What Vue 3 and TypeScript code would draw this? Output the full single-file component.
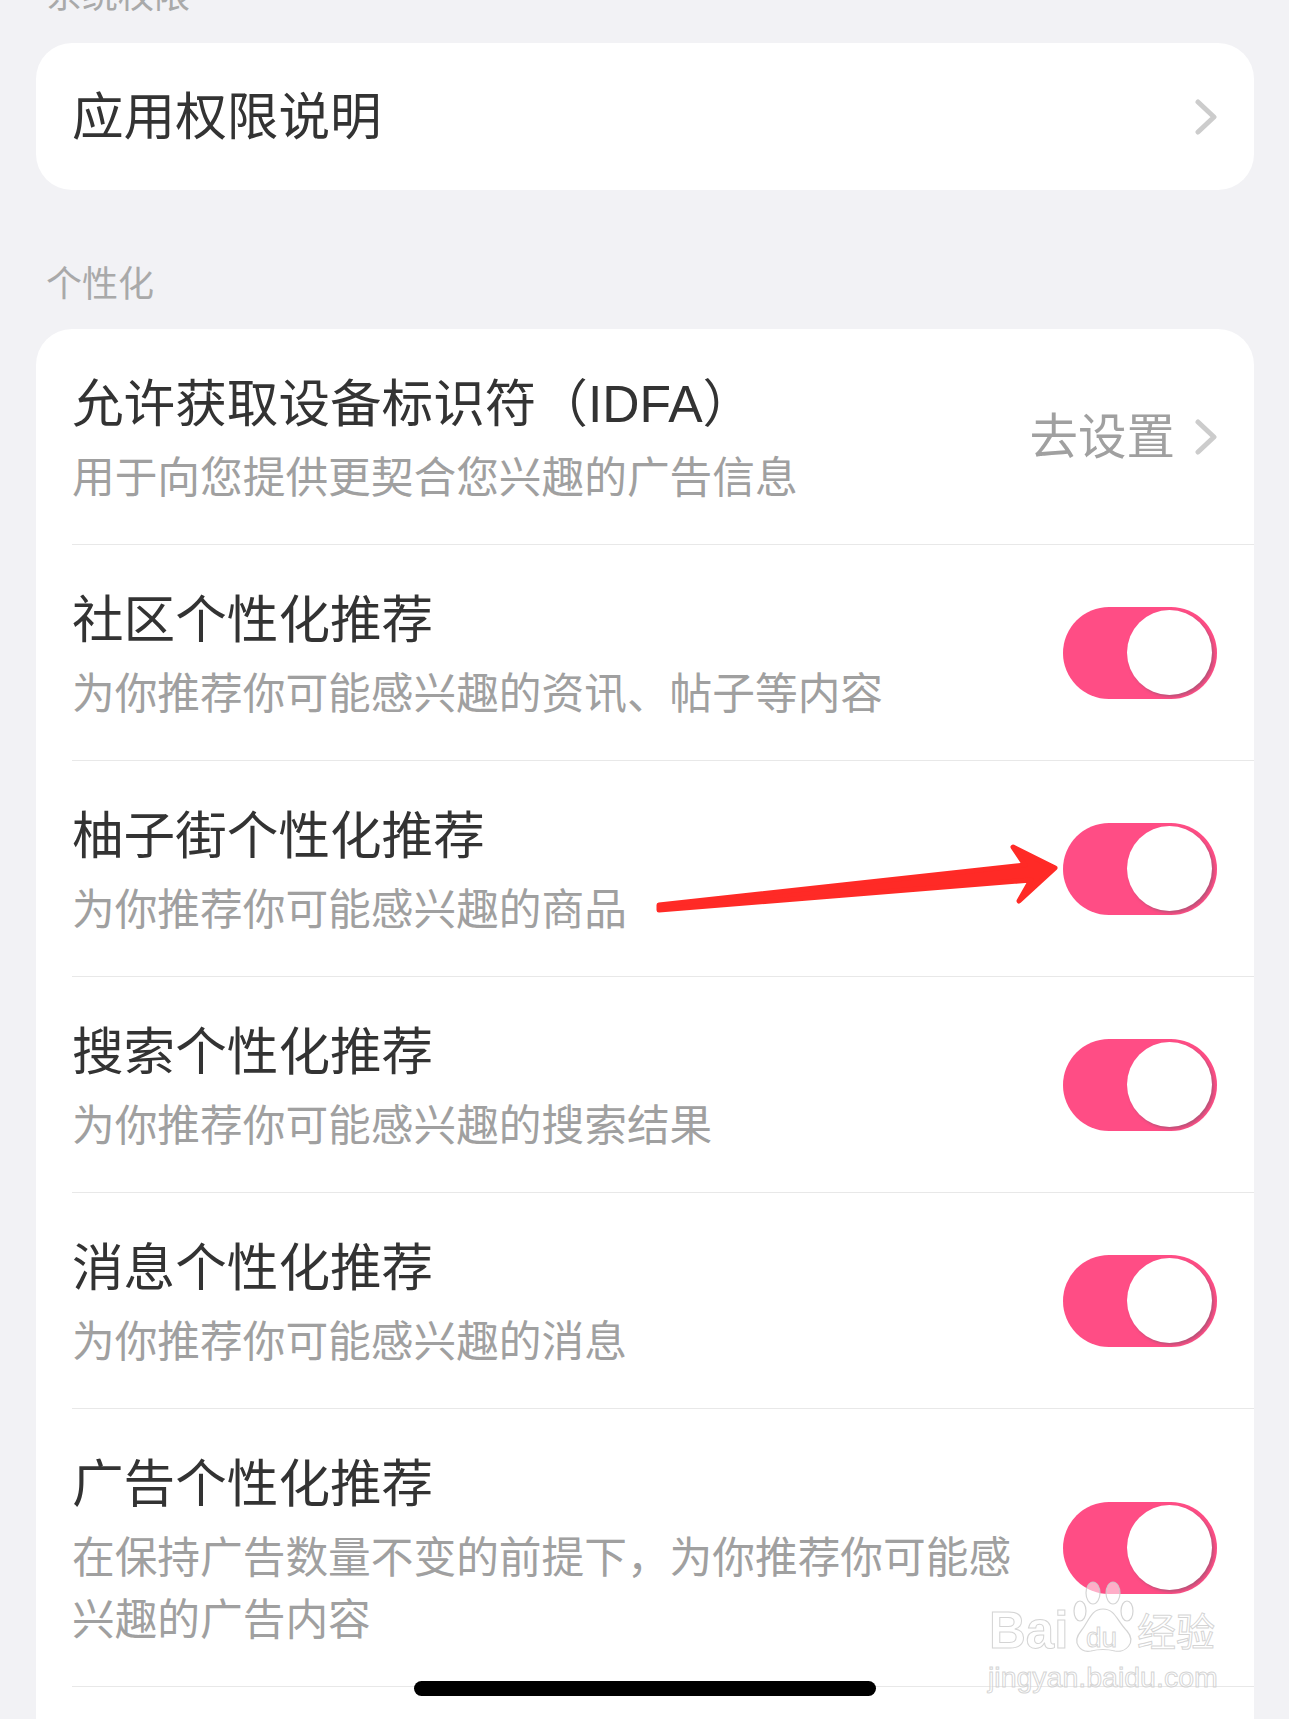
<script setup lang="ts">
interface Row {
  title: string
  sub: string
}
const rows: Row[] = [
  { title: '社区个性化推荐', sub: '为你推荐你可能感兴趣的资讯、帖子等内容' },
  { title: '柚子街个性化推荐', sub: '为你推荐你可能感兴趣的商品' },
  { title: '搜索个性化推荐', sub: '为你推荐你可能感兴趣的搜索结果' },
  { title: '消息个性化推荐', sub: '为你推荐你可能感兴趣的消息' },
  { title: '广告个性化推荐', sub: '在保持广告数量不变的前提下，为你推荐你可能感兴趣的广告内容' },
]
</script>

<template>
  <div class="page">
    <div class="label first">系统权限</div>
    <section class="card single">
      <div class="single-row">
        <span class="title">应用权限说明</span>
        <svg class="chev" viewBox="0 0 22 36"><path d="M3 3 L19 18 L3 33" /></svg>
      </div>
    </section>

    <div class="label second">个性化</div>
    <section class="card list">
      <div class="row">
        <div class="texts">
          <div class="title">允许获取设备标识符（IDFA）</div>
          <div class="sub">用于向您提供更契合您兴趣的广告信息</div>
        </div>
        <div class="action">
          <span class="go">去设置</span>
          <svg class="chev" viewBox="0 0 22 36"><path d="M3 3 L19 18 L3 33" /></svg>
        </div>
      </div>
      <div v-for="r in rows" :key="r.title" class="row">
        <div class="texts">
          <div class="title">{{ r.title }}</div>
          <div class="sub">{{ r.sub }}</div>
        </div>
        <div class="toggle"><span class="knob"></span></div>
      </div>
    </section>

    <svg class="arrow" viewBox="0 0 420 90" width="420" height="90">
      <path
        d="M6 65 L372 25 L360 7 L402 28 L366 61 L378 40 L6 70 Z"
        fill="#ff2a26"
        stroke="#ff2a26"
        stroke-width="5"
        stroke-linejoin="round"
      />
    </svg>

    <div class="watermark">
      <svg class="paw" viewBox="0 0 62 74">
        <ellipse cx="20" cy="12" rx="7" ry="11" />
        <ellipse cx="40" cy="12" rx="7" ry="11" />
        <ellipse cx="7" cy="30" rx="6" ry="10" />
        <ellipse cx="54" cy="30" rx="6" ry="10" />
        <path d="M30 28 C42 28 44 40 54 50 C64 62 52 72 42 70 C34 68 26 68 18 70 C8 72 -2 62 8 50 C16 40 18 28 30 28 Z" />
      </svg>
      <span class="wm-bai">Bai</span>
      <span class="wm-du">du</span>
      <span class="wm-cn">经验</span>
      <span class="wm-url">jingyan.baidu.com</span>
    </div>

    <div class="home"></div>
  </div>
</template>

<style>
html,
body {
  margin: 0;
  background: #f2f2f5;
}
</style>

<style scoped>
.page {
  position: relative;
  height: 1719px;
  overflow: hidden;
  background: #f2f2f5;
  padding: 0 35px 0 36px;
  box-sizing: border-box;
  font-family: "Liberation Sans", "Noto Sans CJK SC", sans-serif;
}
.label {
  height: 50px;
  line-height: 50px;
  font-size: 36px;
  color: #a9a9a9;
  padding-left: 10px;
}
.label.first {
  margin-top: -29px;
  margin-bottom: 22px;
}
.label.second {
  margin-top: 70px;
  margin-bottom: 19px;
}
.card {
  background: #fff;
  border-radius: 36px 36px 0 0;
  padding-left: 36px;
}
.card.list {
  padding-bottom: 60px;
}
.card.single {
  border-radius: 36px;
  height: 147px;
}
.single-row {
  height: 100%;
  display: flex;
  align-items: center;
  justify-content: space-between;
  padding-right: 37px;
}
.row {
  display: flex;
  align-items: center;
  justify-content: space-between;
  border-bottom: 1px solid #e8e8e8;
  padding-right: 37px;
  min-height: 215px;
}
.texts {
  width: 950px;
  padding: 43px 0 35px;
  box-sizing: border-box;
}
.title {
  font-size: 51.6px;
  line-height: 64px;
  color: #333;
  white-space: nowrap;
}
.sub {
  margin-top: 11px;
  font-size: 42.7px;
  line-height: 62px;
  color: #a0a0a0;
}
.action {
  display: flex;
  align-items: center;
  gap: 20px;
}
.go {
  font-size: 48.5px;
  line-height: 60px;
  color: #a0a0a0;
}
.chev {
  display: block;
  width: 22px;
  height: 36px;
  flex: none;
}
.chev path {
  fill: none;
  stroke: #ccc;
  stroke-width: 5;
  stroke-linecap: round;
  stroke-linejoin: round;
}
.toggle {
  position: relative;
  flex: none;
  width: 154px;
  height: 92px;
  border-radius: 46px;
  background: #ff4d85;
}
.knob {
  position: absolute;
  right: 5px;
  top: 3px;
  width: 85px;
  height: 85px;
  border-radius: 50%;
  background: #fff;
  box-shadow: 2px 2px 3px rgba(130, 85, 110, 0.55);
}
.arrow {
  position: absolute;
  left: 653px;
  top: 840px;
}
.watermark {
  position: absolute;
  left: 986px;
  top: 1580px;
  width: 240px;
  height: 112px;
  color: rgba(255, 255, 255, 0.55);
  -webkit-text-stroke: 1px rgba(205, 205, 205, 0.85);
}
.paw {
  position: absolute;
  left: 87px;
  top: 1px;
  width: 62px;
  height: 74px;
}
.paw ellipse,
.paw path {
  fill: rgba(255, 255, 255, 0.55);
  stroke: rgba(205, 205, 205, 0.85);
  stroke-width: 1.2;
}
.wm-bai,
.wm-du,
.wm-cn,
.wm-url {
  position: absolute;
  white-space: nowrap;
}
.wm-bai {
  left: 3px;
  top: 26px;
  font-size: 51px;
  font-weight: 700;
  line-height: 50px;
}
.wm-du {
  left: 100px;
  top: 44px;
  font-size: 28px;
  line-height: 28px;
}
.wm-cn {
  left: 151px;
  top: 32px;
  font-size: 39px;
  line-height: 42px;
}
.wm-url {
  left: 2px;
  top: 82px;
  font-size: 28.5px;
  line-height: 30px;
}
.home {
  position: absolute;
  left: 414px;
  top: 1681px;
  width: 462px;
  height: 15px;
  border-radius: 8px;
  background: #000;
}
</style>
